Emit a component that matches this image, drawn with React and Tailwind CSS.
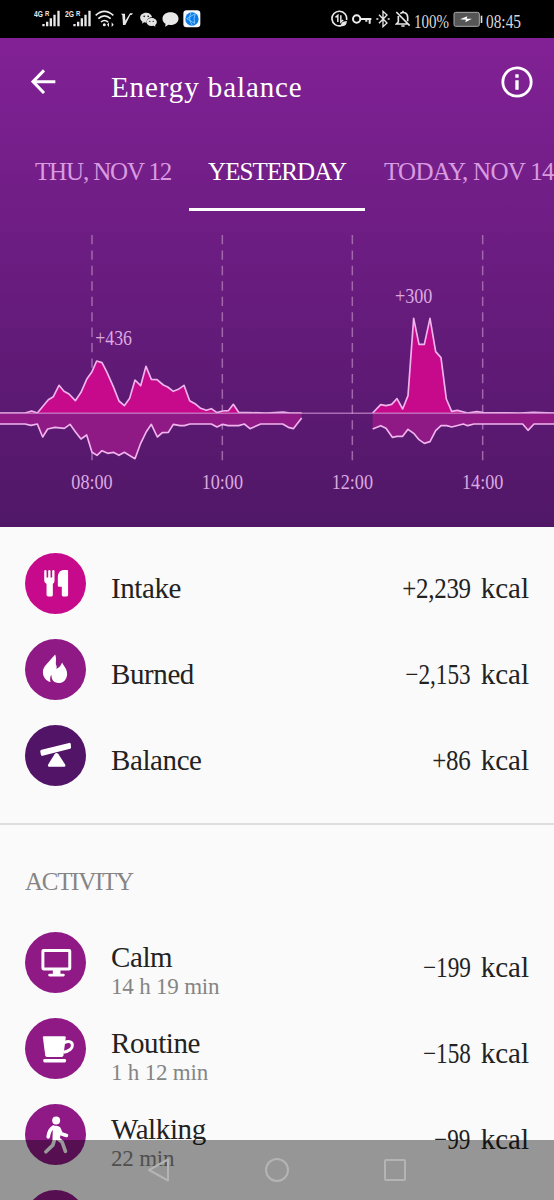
const GRID = [
  { x: 276, label: "08:00" },
  { x: 667, label: "10:00" },
  { x: 1057, label: "12:00" },
  { x: 1448, label: "14:00" },
];

// Chart units are thirds of a pixel, the zero line sits at y = 565
const MORNING_INTAKE =
  "0,564 75,564 95,558 112,564 130,542 145,524 160,515 177,481 192,499 207,507 226,527 243,502 260,463 276,440 290,408 306,413 320,440 340,485 357,528 373,542 389,520 405,465 422,482 438,424 454,463 471,464 490,480 503,486 520,499 535,493 552,481 569,527 585,536 602,550 619,556 634,551 651,563 668,558 685,557 700,538 716,562 800,564 850,561 870,564 905,564";
const MORNING_BURNED =
  "0,597 75,597 93,601 112,597 128,636 143,612 165,607 193,610 210,598 226,620 243,642 260,630 276,682 291,691 306,677 323,685 340,682 357,691 373,682 390,692 405,701 422,655 438,622 454,598 472,636 487,623 505,622 520,598 540,602 553,602 570,597 634,597 651,606 668,598 685,602 716,602 733,597 750,611 782,597 848,597 865,607 880,611 905,579";
const NOON_INTAKE =
  "1118,564 1142,539 1158,542 1175,538 1191,521 1208,552 1224,512 1241,280 1257,358 1273,358 1290,280 1307,380 1323,398 1339,522 1355,559 1372,556 1403,564 1430,560 1450,563 1560,564 1600,562 1662,564";
const NOON_BURNED =
  "1118,612 1142,602 1158,610 1177,637 1191,634 1208,634 1224,613 1241,625 1257,644 1273,655 1290,650 1307,617 1323,602 1340,602 1355,606 1390,597 1403,602 1422,597 1568,597 1584,616 1602,597 1662,597";

const summary = [
  { icon: "intake", color: "bg-[#c70a8c]", name: "Intake", sign: "+", value: "2,239" },
  { icon: "burned", color: "bg-[#8f1a86]", name: "Burned", sign: "−", value: "2,153" },
  { icon: "balance", color: "bg-[#511466]", name: "Balance", sign: "+", value: "86" },
];

const activities = [
  { icon: "calm", color: "bg-[#8f1a86]", name: "Calm", duration: "14 h 19 min", sign: "−", value: "199" },
  { icon: "routine", color: "bg-[#8f1a86]", name: "Routine", duration: "1 h 12 min", sign: "−", value: "158" },
  { icon: "walking", color: "bg-[#8f1a86]", name: "Walking", duration: "22 min", sign: "−", value: "99" },
];

function Area({ points, from, to, fill }) {
  return (
    <>
      <polygon points={`${from},565 ${points} ${to},565`} fill={fill} />
      <polyline
        points={points}
        fill="none"
        stroke="#f0b4ec"
        strokeWidth="5"
        strokeLinejoin="round"
      />
    </>
  );
}

function ChartLabel({ x, y, width, children }) {
  return (
    <text
      x={x}
      y={y}
      textLength={width}
      lengthAdjust="spacingAndGlyphs"
      fontSize="62"
      fill="#dda9e0"
    >
      {children}
    </text>
  );
}

function Chart() {
  return (
    <svg viewBox="0 0 1662 906" className="block h-[302px] w-full">
      {GRID.map((line) => (
        <line
          key={line.x}
          x1={line.x}
          x2={line.x}
          y1="30"
          y2="706"
          stroke="#a267ad"
          strokeWidth="4.5"
          strokeDasharray="28 18.3"
        />
      ))}
      <Area points={MORNING_INTAKE} from={0} to={905} fill="#c70a8c" />
      <Area points={MORNING_BURNED} from={0} to={905} fill="#8f1a86" />
      <Area points={NOON_INTAKE} from={1118} to={1662} fill="#c70a8c" />
      <Area points={NOON_BURNED} from={1118} to={1662} fill="#8f1a86" />
      <line x1="0" x2="1662" y1="565" y2="565" stroke="#d59ad6" strokeOpacity="0.65" strokeWidth="4.5" />
      {GRID.map((line) => (
        <ChartLabel key={line.label} x={line.x - 62} y={791} width={124}>
          {line.label}
        </ChartLabel>
      ))}
      <ChartLabel x={286} y={361} width={110}>+436</ChartLabel>
      <ChartLabel x={1185} y={233} width={112}>+300</ChartLabel>
    </svg>
  );
}

function Signal({ label }) {
  return (
    <svg viewBox="0 0 78 54" className="h-[18px] w-[26px]" fill="#e8e8e8">
      <text x="0" y="21" fontSize="27" fontWeight="bold" fontFamily="Liberation Sans, sans-serif" textLength="27" lengthAdjust="spacingAndGlyphs">
        {label}
      </text>
      <text x="33" y="17" fontSize="23" fontWeight="bold" fontFamily="Liberation Sans, sans-serif" textLength="13" lengthAdjust="spacingAndGlyphs">
        R
      </text>
      <path d="M25 42h7v7h-7zM36 35h7v14h-7zM47 25h7v24h-7zM58 14h7v35h-7zM70 2h7v47h-7z" />
    </svg>
  );
}

function StatusLeft() {
  return (
    <div className="flex items-center">
      <Signal label="4G" />
      <div className="w-[5px]" />
      <Signal label="2G" />
      <svg viewBox="0 0 60 54" className="ml-1 h-[18px] w-5" fill="none" stroke="#eee" strokeWidth="5">
        <path d="M2 16Q28-8 55 16M10 26Q28 9 47 26M18 36Q28 27 39 36" />
        <circle cx="28" cy="44" r="4.5" fill="#eee" stroke="none" />
        <path d="M36 44l6-7v14zM56 44l-6-7v14z" fill="#eee" stroke="none" />
      </svg>
      <svg viewBox="0 0 36 54" className="ml-1.5 h-[18px] w-3" fill="#e8e8e8">
        <path d="M0 11h12l1 21L27 10h9l-4 5h-4L13 45H6L4 16z" />
      </svg>
      <svg viewBox="0 0 50 54" className="ml-[7px] h-[18px] w-[17px]" fill="#e4e4e4">
        <path d="M18 8C7 8 0 15 0 23c0 5 3 9 7 12l-2 6 7-4 7 1c0-10 8-16 17-16C34 13 27 8 18 8z" />
        <path d="M34 24c-9 0-15 6-15 12s6 12 15 12l6-1 6 3-1-5c3-2 5-5 5-9 0-6-7-12-16-12z" />
        <g fill="#111">
          <circle cx="12" cy="19" r="2.5" />
          <circle cx="24" cy="19" r="2.5" />
          <circle cx="29" cy="34" r="2" />
          <circle cx="39" cy="34" r="2" />
        </g>
      </svg>
      <svg viewBox="0 0 50 54" className="ml-[5px] h-[18px] w-[17px]" fill="#e8e8e8">
        <path d="M25 7C11 7 1 15 1 26c0 7 4 12 9 15l-1 9 10-6 6 1c14 0 24-8 24-19S39 7 25 7z" />
      </svg>
      <svg viewBox="0 0 54 54" className="ml-1 h-[18px] w-[18px]">
        <rect x="1" y="1" width="51" height="51" rx="10" fill="#f4f8ff" />
        <circle cx="27" cy="27" r="20" fill="#0a7be8" />
        <path d="M11 26l26-15M11 26l24 14M37 11q-7 15-2 29M24 8q-10 20 4 38" fill="none" stroke="#8fd0ff" strokeWidth="2.5" />
      </svg>
    </div>
  );
}

function StatusText({ children }) {
  return (
    <svg viewBox="0 0 36 18" className="h-[18px] w-9 overflow-visible" fill="#d8d8d8">
      <text x="0" y="18" fontSize="18.5" textLength="35" lengthAdjust="spacingAndGlyphs">
        {children}
      </text>
    </svg>
  );
}

function StatusRight() {
  return (
    <div className="flex items-center">
      <svg viewBox="0 0 50 54" className="h-[18px] w-[17px]" fill="none" stroke="#e8e8e8" strokeWidth="5">
        <path d="M46 30A22 22 0 1 0 30 47" />
        <path d="M13 22l7-6v20M36 30l-7 6V16" strokeWidth="4.5" />
        <path d="M29 48c0-11 6-14 18-15 0 10-6 18-18 15z" fill="#e8e8e8" stroke="none" />
      </svg>
      <svg viewBox="0 0 60 54" className="ml-1 h-[18px] w-5" fill="none" stroke="#eee" strokeWidth="6">
        <circle cx="14" cy="27" r="11" />
        <path d="M25 27h33M53 27v14M43 27v8" />
      </svg>
      <svg viewBox="0 0 42 54" className="ml-1 h-[18px] w-3.5" fill="none" stroke="#e8e8e8" strokeWidth="4">
        <path d="M9 14l24 25-12 11V4l12 11L9 40" />
        <path d="M1 27h6M35 27h6" strokeWidth="5" />
      </svg>
      <svg viewBox="0 0 48 54" className="ml-[5px] mr-[3px] h-[18px] w-4" fill="none" stroke="#e8e8e8" strokeWidth="5">
        <path d="M4 6l40 41M10 18v18l-6 6h33M16 11c6-6 22-5 22 11v12M19 48h10M24 2v6" />
      </svg>
      <StatusText>100%</StatusText>
      <svg viewBox="0 0 90 54" className="ml-[3px] mr-[3px] h-[18px] w-[30px]">
        <rect x="3" y="7" width="76" height="42" rx="5" fill="#555" stroke="#aaa" strokeWidth="3" />
        <path d="M83 17h5v22h-5z" fill="#ddd" />
        <path d="M21 28l22-9-2 7h16L37 37l2-8z" fill="#fff" />
      </svg>
      <StatusText>08:45</StatusText>
    </div>
  );
}

const glyphs = {
  intake: (
    <>
      <path d="M58 54q0-3 3.500-3t3.500 3v20h5V54q0-3 3.500-3t3.500 3v20h5V54q0-3 3.500-3t3.500 3v30q0 7-5 9v33q0 5-4 5h-10q-5 0-5-5V93q-7-3-7-9z" />
      <path d="M130 54v73q0 4-4 4h-11q-4 0-4-4v-25h-8q-4 0-4-4V75c0-17 8-24 20-24h8q3 0 3 3z" />
    </>
  ),
  burned: (
    <path d="M91 47C97 63 90 72 95 81Q97 85 94 90C102 89 108 80 112 71C116 82 127 88 127 105C127 123 115 133 101 133C87 132 79 124 80 108C75 114 75 122 77 130C62 125 54 113 54 100C54 83 67 75 76 63Q85 54 91 47Z" />
  ),
  balance: (
    <>
      <path d="M50 75l83-21q4-1 5 3l1 10q0 4-3 5l-83 21q-4 1-5-3l-2-10q0-4 4-5z" />
      <path d="M89 88q6-7 12 0l20 31q3 7-3 7H73q-6 0-3-7z" />
    </>
  ),
  calm: (
    <>
      <rect x="54" y="55.5" width="81" height="56" rx="2" fill="none" stroke="white" strokeWidth="9" />
      <path d="M84 114h23v12h9q4 0 4 4t-4 4H74q-4 0-4-4t4-4h10z" />
    </>
  ),
  routine: (
    <>
      <path d="M57 55h62q4 0 4 4l-7 53q-1 6-7 6H68q-6 0-7-6l-7-53q0-4 3-4z" />
      <path d="M119 74c30-14 35 25-3 29" fill="none" stroke="white" strokeWidth="9" />
      <rect x="55" y="124" width="69" height="10" rx="4" />
    </>
  ),
  walking: (
    <>
      <circle cx="94" cy="50" r="12" />
      <path d="M84 68q10-5 20 1l4 15-3 22H83z" />
      <path
        d="M86 70Q73 77 70 99M102 74l7 16 16 5M90 104l-6 20-21 20M98 104l14 11 10 28"
        fill="none"
        stroke="white"
        strokeWidth="11"
        strokeLinecap="round"
        strokeLinejoin="round"
      />
    </>
  ),
};

function Badge({ icon, color }) {
  return (
    <svg viewBox="0 0 184 184" className={`size-[61px] shrink-0 rounded-full ${color}`} fill="white">
      {glyphs[icon]}
    </svg>
  );
}

function Amount({ sign, value }) {
  return (
    <div className="flex items-baseline text-[29px] leading-8">
      <span className={sign === "−" ? "origin-right scale-x-[0.8]" : "origin-right scale-x-[0.86] tracking-[-0.3px]"}>
        {sign}
        {value}
      </span>
      <span className="ml-2.5">kcal</span>
    </div>
  );
}

function Row({ icon, color, name, duration, sign, value }) {
  return (
    <div className="flex h-[86px] items-center px-[25px]">
      <Badge icon={icon} color={color} />
      <div className={duration ? "ml-[25px] mt-[17px]" : "ml-[25px] mt-[9px]"}>
        <p className="text-[29px] leading-8 tracking-[-0.4px]">{name}</p>
        {duration && (
          <p className="text-[23px] leading-7 tracking-[-0.2px] text-[#858585]">{duration}</p>
        )}
      </div>
      <div className="ml-auto mt-[9px]">
        <Amount sign={sign} value={value} />
      </div>
    </div>
  );
}

export default function App() {
  return (
    <div className="relative h-[1200px] w-[554px] overflow-hidden bg-[#fafafa] font-['Liberation_Serif',serif] text-[#222]">
      <div className="flex h-[38px] items-center justify-between bg-black pl-[34px] pr-[32px]">
        <StatusLeft />
        <StatusRight />
      </div>

      <header className="h-[489px] bg-linear-to-b from-[#822196] to-[#501767] text-white">
        <div className="flex h-[87px] items-center pl-[31px] pr-[21px]">
          <svg viewBox="0 0 75 75" className="size-[25px]" fill="none" stroke="white" strokeWidth="9">
            <path d="M39 4L6 38l33 34M6 38h67" />
          </svg>
          <h1 className="ml-[55px] mt-3 text-[29px] tracking-[0.9px]">Energy balance</h1>
          <svg viewBox="0 0 96 96" className="ml-auto size-8" fill="white">
            <circle cx="48" cy="48" r="42.5" fill="none" stroke="white" strokeWidth="8.5" />
            <path d="M43 25h10v10H43zM43 43h10v28H43z" />
          </svg>
        </div>
        <nav className="flex h-[86px] whitespace-nowrap text-[25px] text-[#d99be0]">
          <div className="w-[189px] shrink-0 pl-[35px] pt-[28px] tracking-[-1.15px]">THU, NOV 12</div>
          <div className="h-full w-[176px] shrink-0 border-b-[3px] border-white pl-[19px] pt-[28px] tracking-[-0.9px] text-white">
            YESTERDAY
          </div>
          <div className="shrink-0 pl-[19px] pt-[28px] tracking-[-0.7px]">TODAY, NOV 14</div>
        </nav>
        <div className="pt-[14px]">
          <Chart />
        </div>
      </header>

      <section className="h-[298px] border-b-2 border-[#dedede] pt-[13px]">
        {summary.map((item) => (
          <Row key={item.name} {...item} />
        ))}
      </section>

      <section>
        <h2 className="h-[94px] pl-[25px] pt-[38px] text-[25px] tracking-[-1.3px] text-[#858585]">ACTIVITY</h2>
        {activities.map((item) => (
          <Row key={item.name} {...item} />
        ))}
        <div className="flex h-[86px] items-center pl-[25px]">
          <div className="size-[61px] rounded-full bg-[#8f1a86]" />
        </div>
      </section>

      <div className="absolute inset-x-0 bottom-0 flex h-[60px] items-center justify-center gap-[94px] bg-black/40">
        <svg viewBox="0 0 24 24" className="size-6" fill="none" stroke="#b4b4b4" strokeWidth="2" strokeLinejoin="round">
          <path d="M2 12L21 1.5v21z" />
        </svg>
        <svg viewBox="0 0 24 24" className="size-6" fill="none" stroke="#b4b4b4" strokeWidth="2">
          <circle cx="12" cy="12" r="11" />
        </svg>
        <svg viewBox="0 0 24 24" className="size-6" fill="none" stroke="#b4b4b4" strokeWidth="2">
          <rect x="2" y="2" width="20" height="20" rx="1" />
        </svg>
      </div>
    </div>
  );
}
